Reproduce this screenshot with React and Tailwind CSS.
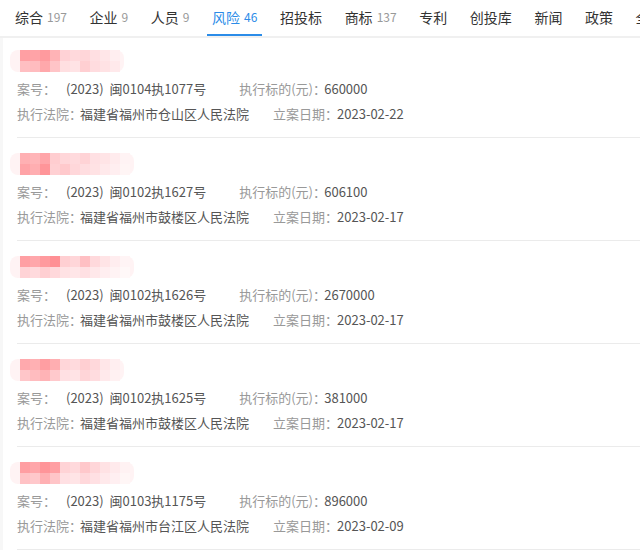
import React from 'react';

const tabs = [
    { name: '综合', count: '197' },
    { name: '企业', count: '9' },
    { name: '人员', count: '9' },
    { name: '风险', count: '46', active: true },
    { name: '招投标' },
    { name: '商标', count: '137' },
    { name: '专利' },
    { name: '创投库' },
    { name: '新闻' },
    { name: '政策' },
    { name: '全网' },
];

const records = [
    {
        caseNo: '闽0104执1077号', amount: '660000', court: '福建省福州市仓山区人民法院', date: '2023-02-22',
        top: ['#ff9fa3', '#ffa3a7', '#ff9a9e', '#ffb3b6', '#ffd2d6', '#ffd9dc', '#ffd6d9', '#ffdfe2', '#ffe6e8', '#ffeef0'],
        bottom: ['#ffbfc2', '#ffbcbf', '#ffa8ab', '#ffc4c7', '#ffdfe1', '#ffe3e5', '#ffcfd2', '#ffdcdf', '#ffe2e4', '#ffe9eb'],
    },
    {
        caseNo: '闽0102执1627号', amount: '606100', court: '福建省福州市鼓楼区人民法院', date: '2023-02-17',
        top: ['#ffb0b3', '#ffb5b8', '#ffa5a9', '#ffcdd0', '#ffd6d9', '#ffdadd', '#ffd3d6', '#ffe0e3', '#ffe4e6', '#ffebed', '#fff3f4'],
        bottom: ['#ffa3a7', '#ffaeb1', '#ff9599', '#ffd0d3', '#ffc9cc', '#ffd7da', '#ffdde0', '#ffe2e4', '#ffe9eb', '#ffeef0', '#fff5f5'],
    },
    {
        caseNo: '闽0102执1626号', amount: '2670000', court: '福建省福州市鼓楼区人民法院', date: '2023-02-17',
        top: ['#ff9fa3', '#ffa7ab', '#ff9a9e', '#ff8f94', '#ffcfd2', '#ffd6d9', '#ffbfc3', '#ffd9dc', '#ffe4e6', '#ffedef', '#fff4f5'],
        bottom: ['#ffd3d6', '#ffdadd', '#ffcfd2', '#ffd8db', '#ffe2e4', '#ffe6e8', '#ffe0e3', '#ffe8ea', '#ffeef0', '#fff3f4', '#fff8f8'],
    },
    {
        caseNo: '闽0102执1625号', amount: '381000', court: '福建省福州市鼓楼区人民法院', date: '2023-02-17',
        top: ['#ffa9ad', '#ffb0b3', '#ff9ea2', '#ffaeb1', '#ffd6d9', '#ffdadd', '#ffcfd2', '#ffd8db', '#ffe6e8', '#ffeef0'],
        bottom: ['#ffc6c9', '#ffbcbf', '#ffb3b6', '#ffc9cc', '#ffe0e3', '#ffe3e5', '#ffd5d8', '#ffdcdf', '#ffe9eb', '#fff1f2'],
    },
    {
        caseNo: '闽0103执1175号', amount: '896000', court: '福建省福州市台江区人民法院', date: '2023-02-09',
        top: ['#ff9ea2', '#ffa6aa', '#ff9599', '#ff9fa3', '#ffd3d6', '#ffd9dc', '#ffc8cb', '#ffd6d9', '#ffe2e4', '#ffeaec', '#fff2f3'],
        bottom: ['#ffc2c5', '#ffc8cb', '#ffb0b3', '#ffc5c8', '#ffe0e3', '#ffe4e6', '#ffd8db', '#ffe0e3', '#ffe9eb', '#ffeff1', '#fff6f6'],
    },
];

// mosaic placeholder where the name was pixelated
const Mosaic = ({ top, bottom }) => {
    const w = top.length * 10 + 14;
    return (
        <svg width={w} height="22" viewBox={`0 0 ${w} 22`}>
            <rect x="0" y="0" width={w} height="22" rx="8" fill="#fff3f4" />
            {[top, bottom].map((row, r) =>
                row.map((c, i) => (
                    <rect key={`${r}-${i}`} x={10 + i * 10} y={r * 11} width="10" height="11" fill={c} />
                ))
            )}
        </svg>
    );
};

const Record = ({ r, first }) => (
    <div className={`pl-[14px] ${first ? 'pt-[12px]' : 'pt-[15px]'}`}>
        <div className="-ml-[7px] h-[22px]">
            <Mosaic top={r.top} bottom={r.bottom} />
        </div>
        <div className="mt-[4px] pb-[11px] border-b border-[#ebebeb] text-[13px] leading-[25px] whitespace-nowrap">
            <div className="flex">
                <span className="w-[49px] text-[#999]">案号：</span>
                <span className="text-[#555]">(2023)&nbsp;&nbsp;{r.caseNo}</span>
                <span className="ml-[33px] w-[85px] text-[#999]">执行标的(元)：</span>
                <span className="text-[#555]">{r.amount}</span>
            </div>
            <div className="flex">
                <span className="w-[63px] text-[#999]">执行法院：</span>
                <span className="text-[#555]">{r.court}</span>
                <span className="ml-[24px] w-[64px] text-[#999]">立案日期：</span>
                <span className="text-[#555]">{r.date}</span>
            </div>
        </div>
    </div>
);

const App = () => {
    return (
        <div
            className="w-[640px] h-[553px] overflow-hidden bg-white"
            style={{ fontFamily: '"Microsoft YaHei", "Noto Sans CJK SC", "Noto Sans", sans-serif' }}
        >
            <div className="h-[38px] border-b-2 border-[#f0f0f0] flex items-stretch pl-[10px] gap-[12.6px] whitespace-nowrap overflow-hidden">
                {tabs.map((t) => (
                    <div
                        key={t.name}
                        className={`shrink-0 flex items-center px-[5px] border-b-2 ${t.active ? 'border-[#2b8ce8] text-[#2b8ce8]' : 'border-transparent text-[#333]'}`}
                    >
                        <span className="text-[14px]">{t.name}</span>
                        {t.count && (
                            <span className={`ml-[4px] text-[12px] ${t.active ? 'text-[#2b8ce8]' : 'text-[#999]'}`}>{t.count}</span>
                        )}
                    </div>
                ))}
            </div>
            <div className="border-l-[3px] border-[#f7f7f7]">
                {records.map((r, i) => (
                    <Record key={i} r={r} first={i === 0} />
                ))}
            </div>
        </div>
    );
};

export default App;
